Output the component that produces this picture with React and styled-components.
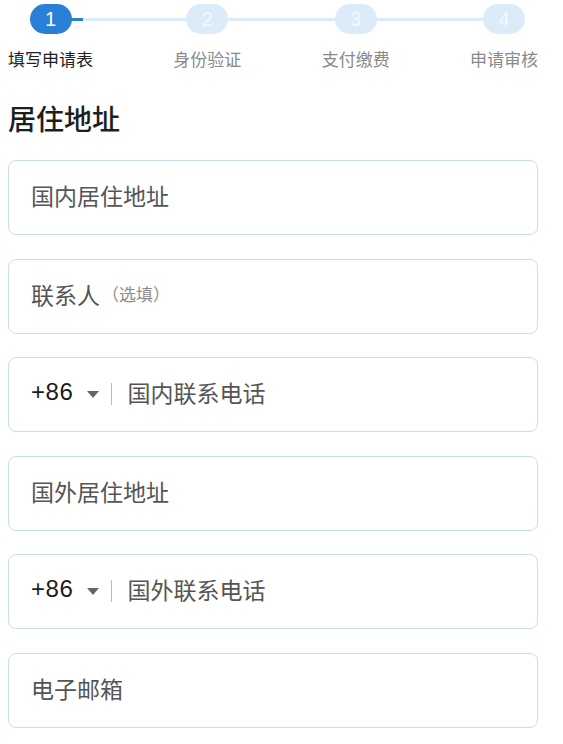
import React from 'react';
import styled, { createGlobalStyle } from 'styled-components';

const GlobalStyle = createGlobalStyle`
  body {
    margin: 0;
    background: #fff;
    font-family: "Noto Sans CJK SC", "Noto Sans", sans-serif;
  }
`;

const steps = ['填写申请表', '身份验证', '支付缴费', '申请审核'];

const fields = [
  { label: '国内居住地址' },
  { label: '联系人', hint: '（选填）' },
  { label: '国内联系电话', phone: true },
  { label: '国外居住地址' },
  { label: '国外联系电话', phone: true },
  { label: '电子邮箱' },
];

function App() {
  return (
    <>
      <GlobalStyle />
      <Page>
        <Stepper>
          {steps.map((name, i) => (
            <Step key={name}>
              <Circle $active={i === 0}>{i + 1}</Circle>
              <StepLabel $active={i === 0}>{name}</StepLabel>
            </Step>
          ))}
        </Stepper>

        <Title>居住地址</Title>

        <FieldList>
          {fields.map(f => (
            <Field key={f.label}>
              {f.phone && (
                <>
                  <Code>+86</Code>
                  <Caret />
                  <Divider />
                </>
              )}
              <Placeholder>{f.label}</Placeholder>
              {f.hint && <Hint>{f.hint}</Hint>}
            </Field>
          ))}
        </FieldList>
      </Page>
    </>
  );
}
export default App;

const Page = styled.div`
  width: 530px;
  padding: 4px 0 0 8px;
`;

const Stepper = styled.div`
  position: relative;
  display: flex;
  justify-content: space-between;

  /* 연결선 */
  &::before {
    content: '';
    position: absolute;
    left: 43px;
    right: 34px;
    top: 14px;
    height: 3px;
    background: #dcebf9;
  }
  &::after {
    content: '';
    position: absolute;
    left: 43px;
    width: 32px;
    top: 14px;
    height: 3px;
    background: #2a7fd6;
  }
`;

const Step = styled.div`
  position: relative;
  z-index: 1;
  display: flex;
  flex-direction: column;
  align-items: center;
`;

const Circle = styled.div`
  width: 42px;
  height: 30px;
  border-radius: 15px;
  display: flex;
  align-items: center;
  justify-content: center;
  background: ${p => (p.$active ? '#2a7fd6' : '#dcebf9')};
  color: ${p => (p.$active ? '#fff' : '#f4f9fe')};
  font-family: "Liberation Sans", Arial, sans-serif;
  font-size: 20px;
`;

const StepLabel = styled.div`
  margin-top: 13px;
  font-size: 17px;
  line-height: 24px;
  color: ${p => (p.$active ? '#222' : '#8a8a8a')};
`;

const Title = styled.h1`
  margin: 27px 0 22px;
  font-size: 28px;
  line-height: 40px;
  font-weight: 500;
  color: #1e1e1e;
`;

const FieldList = styled.div`
  display: flex;
  flex-direction: column;
  gap: 23.6px;
`;

const Field = styled.div`
  box-sizing: border-box;
  height: 75px;
  display: flex;
  align-items: center;
  padding: 0 0 5px 22px;
  border: 1.5px solid #c9ddf0;
  border-radius: 8px;
`;

const Placeholder = styled.span`
  font-size: 23px;
  color: #555;
`;

const Hint = styled.span`
  font-size: 17px;
  color: #8c8c8c;
  margin-left: 2px;
`;

const Code = styled.span`
  font-family: "Liberation Sans", Arial, sans-serif;
  font-size: 24px;
  letter-spacing: 0.6px;
  color: #1c1c1c;
`;

const Caret = styled.span`
  margin: 4px 0 0 13px;
  width: 0;
  height: 0;
  border-left: 6.5px solid transparent;
  border-right: 6.5px solid transparent;
  border-top: 7px solid #666;
`;

const Divider = styled.span`
  margin: 4px 16px 0 12px;
  width: 1px;
  height: 22px;
  background: #bbb;
`;
